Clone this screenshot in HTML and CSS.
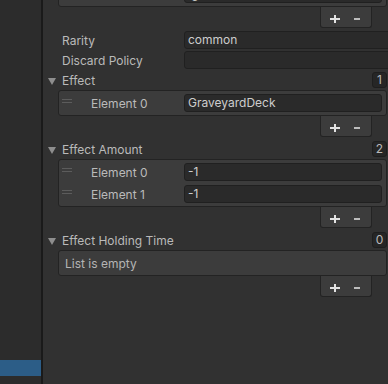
FILE: index.html
```html
<!DOCTYPE html>
<html lang="en">
<head>
  <meta charset="UTF-8">
  <meta name="viewport" content="width=device-width, initial-scale=1.0">
  <title>Card Inspector</title>
  <link rel="stylesheet" href="styles.css">
</head>
<body>
  <div class="window">
    <div class="hierarchy">
      <div class="hier-row selected"></div>
    </div>
    <div class="divider"></div>

    <div class="inspector">
      <!-- tail of the list above, scrolled out of view -->
      <div class="list-box cut">
        <div class="element">
          <span class="handle"></span>
          <span class="el-label">Element 0</span>
          <div class="field">Ignore</div>
        </div>
      </div>
      <div class="list-footer"><span class="plus"></span><span class="minus"></span></div>

      <div class="prop">
        <span class="label">Rarity</span>
        <div class="field wide">common</div>
      </div>
      <div class="prop">
        <span class="label">Discard Policy</span>
        <div class="field wide"></div>
      </div>

      <div class="list-header">
        <span class="foldout"></span>
        <span class="label">Effect</span>
        <span class="count">1</span>
      </div>
      <div class="list-box">
        <div class="element">
          <span class="handle"></span>
          <span class="el-label">Element 0</span>
          <div class="field">GraveyardDeck</div>
        </div>
      </div>
      <div class="list-footer"><span class="plus"></span><span class="minus"></span></div>

      <div class="list-header">
        <span class="foldout"></span>
        <span class="label">Effect Amount</span>
        <span class="count">2</span>
      </div>
      <div class="list-box">
        <div class="element">
          <span class="handle"></span>
          <span class="el-label">Element 0</span>
          <div class="field">-1</div>
        </div>
        <div class="element">
          <span class="handle"></span>
          <span class="el-label">Element 1</span>
          <div class="field">-1</div>
        </div>
      </div>
      <div class="list-footer"><span class="plus"></span><span class="minus"></span></div>

      <div class="list-header">
        <span class="foldout"></span>
        <span class="label">Effect Holding Time</span>
        <span class="count">0</span>
      </div>
      <div class="list-box empty">List is empty</div>
      <div class="list-footer"><span class="plus"></span><span class="minus"></span></div>
    </div>
  </div>
</body>
</html>
```

FILE: styles.css
```css
body {
  margin: 0;
  background-color: #313131;
  font-family: Inter, "Noto Sans", sans-serif;
  font-size: 12px;
  color: #bababa;
}
.window {
  display: flex;
  width: 388px;
  height: 384px;
  overflow: hidden;
}
.hierarchy {
  width: 41px;
  flex-shrink: 0;
  background-color: #2c2c2c;
  display: flex;
  flex-direction: column;
  justify-content: flex-end;
  padding-bottom: 8px;
  box-sizing: border-box;
}
.hier-row {
  height: 16px;
}
.hier-row.selected {
  background-color: #2c5d87;
}
.divider {
  width: 2px;
  flex-shrink: 0;
  background-color: #1a1a1a;
}
.inspector {
  flex: 1;
  min-width: 0;
  display: flex;
  flex-direction: column;
  padding: 0 1px 0 15px;
}

/* plain property rows */
.prop {
  height: 20px;
  display: flex;
  align-items: center;
  padding-left: 4px;
}
.label {
  white-space: nowrap;
}
.prop .label {
  width: 122px;
  flex-shrink: 0;
}
.field {
  flex: 1;
  min-width: 0;
  box-sizing: border-box;
  height: 18px;
  line-height: 16px;
  padding-left: 3px;
  background-color: #2a2a2a;
  border: 1px solid #202020;
  border-radius: 3px;
  color: #cdcdcd;
  white-space: nowrap;
  overflow: hidden;
}
.field.wide {
  margin-right: -20px;
}

/* reorderable lists */
.list-header {
  height: 20px;
  display: flex;
  align-items: center;
  margin-left: -10px;
}
.foldout {
  width: 0;
  height: 0;
  margin-top: 2px;
  margin-right: 6px;
  border-left: 4px solid transparent;
  border-right: 4px solid transparent;
  border-top: 7px solid #8e8e8e;
}
.count {
  margin-left: auto;
  min-width: 15px;
  height: 16px;
  box-sizing: border-box;
  line-height: 14px;
  text-align: center;
  background-color: #262626;
  border: 1px solid #1e1e1e;
  border-radius: 3px;
}
.list-box {
  background-color: #3c3c3c;
  border: 1px solid #232323;
  border-radius: 3px;
  padding: 1px 0;
}
.list-box.cut {
  margin-top: -19px;
}
.list-box.empty {
  height: 26px;
  box-sizing: border-box;
  display: flex;
  align-items: center;
  padding: 0 6px;
  color: #b4b4b4;
}
.element {
  height: 22px;
  display: flex;
  align-items: center;
  padding: 0 4px 0 3px;
}
.handle {
  align-self: flex-start;
  flex-shrink: 0;
  width: 10px;
  height: 2px;
  margin-top: 7px;
  border-top: 1px solid #5c5c5c;
  border-bottom: 1px solid #5c5c5c;
}
.el-label {
  width: 93px;
  flex-shrink: 0;
  margin-left: 19px;
  white-space: nowrap;
}
.list-footer {
  align-self: flex-end;
  width: 52px;
  height: 21px;
  box-sizing: border-box;
  margin: 0 15px 2px 0;
  padding: 3px 0 0 9px;
  display: flex;
  align-items: center;
  background-color: #3c3c3c;
  border: 1px solid #232323;
  border-top: none;
  border-radius: 0 0 3px 3px;
}
.plus {
  position: relative;
  width: 10px;
  height: 8px;
}
.plus::before,
.plus::after {
  content: "";
  position: absolute;
  background-color: #e2e2e2;
}
.plus::before {
  left: 0;
  top: 3px;
  width: 10px;
  height: 2px;
}
.plus::after {
  left: 4px;
  top: 0;
  width: 2px;
  height: 8px;
}
.minus {
  width: 6px;
  height: 2px;
  margin-left: 14px;
  background-color: #bdbdbd;
}
```
